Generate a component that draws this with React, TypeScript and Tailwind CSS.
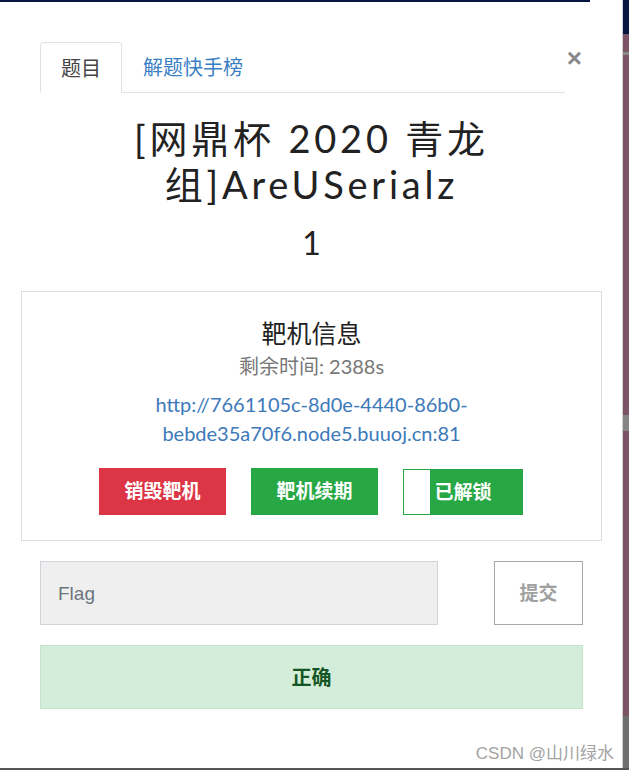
export default function App() {
  const cjk = { fontFamily: 'Lato, "Noto Sans CJK SC", sans-serif' }
  return (
    <div className="relative w-[629px] h-[770px] overflow-hidden bg-[#555]" style={cjk}>
      <div className="flex h-[768px]">
        {/* modal */}
        <div className="w-[622px] h-full bg-white flex flex-col">
          <div className="h-[2px] w-[590px] bg-[#061640]" />
          <div className="pl-[40px] w-[583px] flex flex-col">
            {/* tabs */}
            <div className="relative mt-[40px] flex w-[525px] border-b border-[#dee2e6]">
              <div className="-mb-px h-[51px] px-[20px] flex items-center border border-b-white border-[#dee2e6] rounded-t-[4px] bg-white text-[20px] text-[#444]">
                题目
              </div>
              <div className="h-[50px] px-[21px] flex items-center text-[20px] text-[#3a7fc4]">解题快手榜</div>
              <button className="absolute right-[-17px] top-[3px] text-[26px] leading-none font-bold text-[#888]" style={{ fontFamily: '"Liberation Sans", sans-serif' }}>
                ×
              </button>
            </div>

            {/* title */}
            <h1 className="mt-[22px] text-center text-[38px] leading-[46px] font-normal tracking-[0.1em] text-[#222]">
              [网鼎杯 2020 青龙
              <br />
              组]AreUSerialz
            </h1>
            <div className="mt-[16px] text-center text-[32px] leading-[40px] text-[#222]">1</div>

            {/* card */}
            <div className="mt-[28px] -ml-[19px] w-[581px] h-[250px] border border-[#dddddd] flex flex-col items-center">
              <div className="mt-[25px] text-[25px] leading-[32px] text-[#222]">靶机信息</div>
              <div className="mt-[4px] text-[20px] leading-[27px] text-[#777]">剩余时间: 2388s</div>
              <a className="mt-[10px] w-[340px] text-center text-[20px] leading-[29px] text-[#3d79b9] break-all">
                http://7661105c-8d0e-4440-86b0-
                <br />
                bebde35a70f6.node5.buuoj.cn:81
              </a>
              <div className="mt-[20px] flex gap-[25px] -ml-px">
                <button className="w-[127px] h-[47px] bg-[#dc3545] text-white text-[19px] font-bold">销毁靶机</button>
                <button className="w-[127px] h-[47px] bg-[#28a745] text-white text-[19px] font-bold">靶机续期</button>
                <button className="relative w-[120px] h-[46px] mt-px border border-[#28a745] bg-[#28a745] text-white text-[19px] font-bold">
                  <span className="absolute left-0 top-0 w-[26px] h-full bg-white" />
                  <span className="relative">已解锁</span>
                </button>
              </div>
            </div>

            {/* flag input */}
            <div className="mt-[20px] flex justify-between">
              <div
                className="w-[398px] h-[64px] bg-[#efefef] border border-[#cfd4da] flex items-center pl-[17px] pt-[3px] text-[19px] text-[#6c757d]"
                style={{ fontFamily: '"Liberation Sans", Arial, sans-serif' }}
              >
                Flag
              </div>
              <button className="w-[89px] h-[64px] bg-white border border-[#a8a8a8] text-[19px] font-bold text-[#a0a0a0]">提交</button>
            </div>

            <div className="mt-[20px] h-[64px] w-[543px] bg-[#d4edda] border border-[#c3e6cb] flex items-center justify-center text-[20px] font-bold text-[#155724]">
              正确
            </div>

            <div
              className="mt-[32px] self-end -mr-[31px] text-[17px] text-[#a3a3a3]"
              style={{ fontFamily: '"Liberation Sans", "Noto Sans CJK SC", sans-serif' }}
            >
              CSDN @山川绿水
            </div>
          </div>
        </div>

        {/* background strip on the right */}
        <div className="w-px h-full bg-[#cfcfcf]" />
        <div className="flex-1 h-full flex flex-col">
          <div className="h-[34px] bg-[#061640]" />
          <div className="h-[18px] bg-[#7b5565]" />
          <div className="h-[3px] bg-[#8a8a8a]" />
          <div className="h-[360px] bg-[#7b5565]" />
          <div className="h-[16px] bg-[#868686]" />
          <div className="flex-1 bg-[#7b5565]" />
          <div className="h-[52px] bg-[#6f6f6f]" />
        </div>
      </div>
    </div>
  )
}
